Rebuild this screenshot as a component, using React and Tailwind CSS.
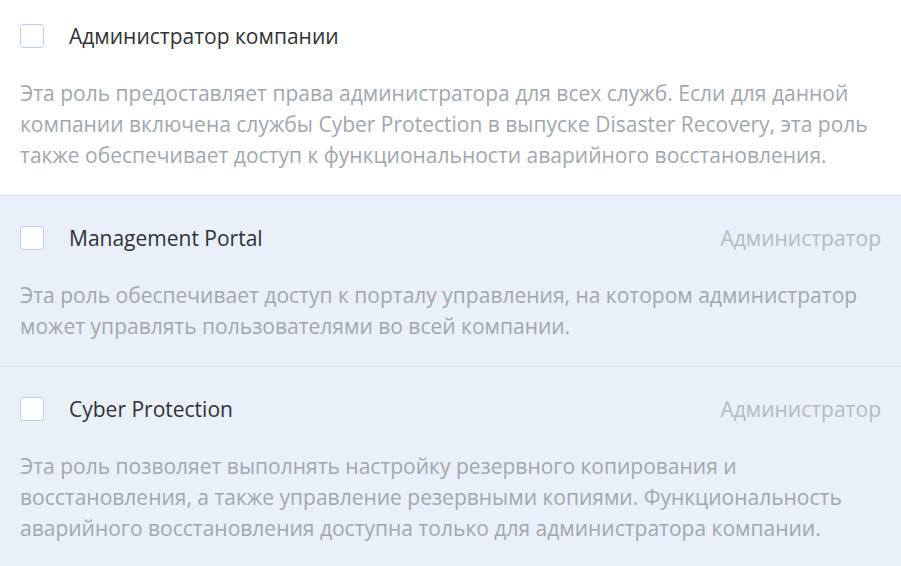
import React from "react";

const roles = [
  {
    id: "company",
    title: "Администратор компании",
    badge: null,
    text: "Эта роль предоставляет права администратора для всех служб. Если для данной компании включена службы Cyber Protection в выпуске Disaster Recovery, эта роль также обеспечивает доступ к функциональности аварийного восстановления.",
  },
  {
    id: "portal",
    title: "Management Portal",
    badge: "Администратор",
    text: "Эта роль обеспечивает доступ к порталу управления, на котором администратор может управлять пользователями во всей компании.",
  },
  {
    id: "cyber",
    title: "Cyber Protection",
    badge: "Администратор",
    text: "Эта роль позволяет выполнять настройку резервного копирования и восстановления, а также управление резервными копиями. Функциональность аварийного восстановления доступна только для администратора компании.",
  },
];

const RoleRow = ({ role, first }) => (
  <div
    className={`px-5 pb-6 ${
      first ? "pt-6 bg-white" : "pt-[30px] border-t border-[#d6e2f4] bg-[#e9f0fa]"
    }`}
  >
    <div className="flex items-center h-6">
      <span className="w-6 h-6 rounded-[3px] border border-[#bed2ef] bg-white shrink-0" />
      <span className="ml-[25px] text-[21px] text-[#2f3236] leading-6">{role.title}</span>
      {role.badge && (
        <span className="ml-auto text-[21px] text-[#b6bac1] leading-6">{role.badge}</span>
      )}
    </div>
    <p className="mt-[30px] text-[21px] leading-[31px] text-[#a2a7ae]">{role.text}</p>
  </div>
);

export default function App() {
  return (
    <div
      className="w-[901px] h-[566px] overflow-hidden bg-white"
      style={{ fontFamily: '"Open Sans", sans-serif' }}
    >
      {roles.map((r, i) => (
        <RoleRow key={r.id} role={r} first={i === 0} />
      ))}
    </div>
  );
}
